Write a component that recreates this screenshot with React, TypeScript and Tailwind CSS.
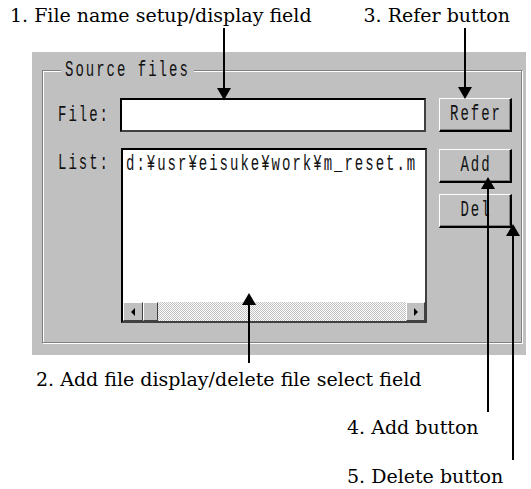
import React from 'react';

const Btn = ({ label }: { label: string }) => (
  <div className="flex h-[34px] w-[73px] items-center justify-center border-t border-l border-r-2 border-b-2 border-t-white border-l-white border-r-black border-b-black bg-[#c0c0c0] pl-[2px] shadow-[inset_-1px_-1px_0_#808080]">
    <span className="inline-block scale-y-[1.6]">{label}</span>
  </div>
);

const ScrollBtn = ({ dir, wide }: { dir: 'left' | 'right'; wide: boolean }) => (
  <div
    className={
      wide
        ? 'flex h-full w-[20px] items-center justify-center border-t border-l border-r border-b border-t-white border-l-white border-r-[#404040] border-b-[#404040] bg-[#c0c0c0]'
        : 'flex h-full w-[19px] items-center justify-center border-t border-l border-r border-b border-t-white border-l-white border-r-[#404040] border-b-[#404040] bg-[#c0c0c0]'
    }
  >
    {dir === 'left' ? (
      <div className="h-0 w-0 border-y-[4px] border-r-[4px] border-y-transparent border-r-black" />
    ) : (
      <div className="h-0 w-0 border-y-[4px] border-l-[4px] border-y-transparent border-l-black" />
    )}
  </div>
);

// callout arrows drawn over the dialog
const Arrows = () => (
  <svg className="pointer-events-none absolute inset-0" width={531} height={489} viewBox="0 0 531 489">
    <g stroke="#000" strokeWidth={2}>
      <line x1={224} y1={28} x2={224} y2={90} />
      <line x1={465} y1={28} x2={465} y2={89} />
      <line x1={249} y1={303} x2={249} y2={363} />
      <line x1={488} y1={187} x2={488} y2={412} />
      <line x1={513} y1={234} x2={513} y2={460} />
    </g>
    <g fill="#000">
      <polygon points="217,88 231,88 224,100" />
      <polygon points="458,87 472,87 465,99" />
      <polygon points="242,305 256,305 249,293" />
      <polygon points="481,189 495,189 488,177" />
      <polygon points="506,236 520,236 513,224" />
    </g>
  </svg>
);

const App = () => {
  return (
    <div className="relative h-[489px] w-[531px] overflow-hidden bg-white text-black">
      <div className="flex h-[52px] items-start font-['DejaVu_Serif',serif] text-[19px] leading-[30px]">
        <span className="ml-[10px]">1. File name setup/display field</span>
        <span className="ml-auto mr-[21px]">3. Refer button</span>
      </div>

      <div className="ml-[32px] w-[494px] bg-[#c0c0c0] pt-[8px] pr-[4px] pb-[12px] pl-[10px] font-['Liberation_Mono',monospace] text-[14px] tracking-[2px] text-[#111]">
        <fieldset className="border border-[#808080] pb-[19px] shadow-[1px_1px_0_#fff,inset_1px_1px_0_#fff]">
          <legend className="ml-[18px] h-[20px] bg-[#c0c0c0] px-[4px] leading-[20px]">
            <span className="inline-block scale-y-[1.6]">Source files</span>
          </legend>

          <div className="mt-[18px] flex items-center">
            <span className="w-[77px] pl-[15px]">
              <span className="inline-block scale-y-[1.6]">File:</span>
            </span>
            <div className="h-[34px] w-[306px] border-2 border-black border-r-[#404040] border-b-[#404040] bg-white" />
            <div className="ml-[13px]">
              <Btn label="Refer" />
            </div>
          </div>

          <div className="mt-[16px] flex items-start">
            <span className="mt-[5px] w-[78px] pl-[15px] leading-[20px]">
              <span className="inline-block scale-y-[1.6]">List:</span>
            </span>
            <div className="flex h-[175px] w-[306px] flex-col overflow-hidden border-2 border-black border-r-[#404040] border-b-[#404040] bg-white">
              <div className="pt-[4px] pl-[3px] leading-[20px] whitespace-nowrap">
                <span className="inline-block scale-y-[1.6]">d:¥usr¥eisuke¥work¥m_reset.m</span>
              </div>
              <div className="mt-auto flex h-[19px]">
                <ScrollBtn dir="left" wide />
                <div className="h-full w-[15px] border-t border-l border-r border-b border-t-white border-l-white border-r-[#404040] border-b-[#404040] bg-[#c0c0c0]" />
                <div className="h-full flex-1 bg-[conic-gradient(#fff_25%,#c0c0c0_0_50%,#fff_0_75%,#c0c0c0_0)] bg-[length:2px_2px]" />
                <ScrollBtn dir="right" wide={false} />
              </div>
            </div>
            <div className="ml-[12px] mt-[1px] flex flex-col gap-[11px]">
              <Btn label="Add" />
              <Btn label="Del" />
            </div>
          </div>
        </fieldset>
      </div>

      <div className="mt-[12px] font-['DejaVu_Serif',serif] text-[19px] leading-[24px]">
        <p className="pl-[36px]">2. Add file display/delete file select field</p>
        <p className="mt-[24px] pl-[347px]">4. Add button</p>
        <p className="mt-[25px] pl-[347px]">5. Delete button</p>
      </div>

      <Arrows />
    </div>
  );
};

export default App;
